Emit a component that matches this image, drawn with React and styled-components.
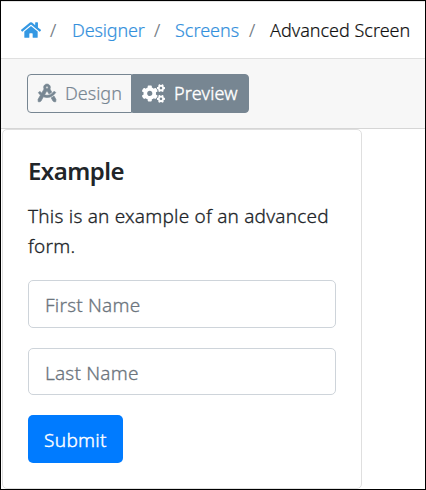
import React from "react";
import styled, { createGlobalStyle } from "styled-components";
import { FaHome, FaDraftingCompass, FaCogs } from "react-icons/fa";

const GlobalStyle = createGlobalStyle`
  * { box-sizing: border-box; }
  body { margin: 0; background: #fff; }
`;

const Frame = styled.div`
  width: 426px;
  height: 490px;
  border: 1px solid #000;
  background: #fff;
  overflow: hidden;
  font-family: "Noto Sans", sans-serif;
  font-weight: 300;
  -webkit-text-stroke: 0.2px currentColor;
`;

const Breadcrumb = styled.nav`
  display: flex;
  align-items: center;
  height: 58px;
  padding: 0 0 0 20px;
  border-top: 1px solid #e4e4e4;
  border-bottom: 1px solid #e0e0e0;
  font-size: 18px;
  line-height: 28px;
  white-space: nowrap;
`;

const HomeLink = styled.a`
  display: flex;
  width: 20px;
  color: #3498e3;
`;

const Crumb = styled.a`
  width: ${(p) => p.$width}px;
  color: ${(p) => (p.$current ? "#111" : "#3490dc")};
  letter-spacing: ${(p) => p.$spacing}px;
`;

const Separator = styled.span`
  width: ${(p) => p.$width}px;
  padding-left: ${(p) => p.$inset}px;
  color: #6c757d;
`;

const Toolbar = styled.div`
  height: 70px;
  padding: 15px 0 0 26px;
  background: #f7f7f7;
  border-bottom: 1px solid #d6d6d6;
`;

const ButtonGroup = styled.div`
  display: flex;
  width: 222px;
  height: 39px;
`;

const ModeButton = styled.button`
  display: flex;
  align-items: center;
  width: ${(p) => p.$width}px;
  padding: 0 0 1px ${(p) => p.$inset}px;
  gap: ${(p) => p.$gap}px;
  border: 1px solid #778692;
  border-radius: ${(p) => (p.$active ? "0 4px 4px 0" : "4px 0 0 4px")};
  background: ${(p) => (p.$active ? "#778692" : "transparent")};
  color: ${(p) => (p.$active ? "#fff" : "#778692")};
  font: 300 18px/28px "Noto Sans", sans-serif;
  -webkit-text-stroke: ${(p) => (p.$active ? 0.4 : 0.2)}px currentColor;
  letter-spacing: ${(p) => p.$spacing}px;
  white-space: nowrap;
`;

const CompassIcon = styled(FaDraftingCompass)`
  stroke: currentColor;
  stroke-width: 18px;
  overflow: visible;
`;

const Card = styled.form`
  width: 360px;
  height: 360px;
  margin-left: 1px;
  padding: 25px 25px;
  border: 1px solid #dfdfdf;
  border-radius: 5px;
  color: #212529;
`;

const Title = styled.h1`
  margin: 0 0 14px;
  font-size: 24px;
  font-weight: 600;
  line-height: 32px;
  letter-spacing: -0.55px;
  -webkit-text-stroke: 0;
`;

const Description = styled.p`
  margin: 0 0 19px;
  font-size: 19px;
  line-height: 30px;
  letter-spacing: 0.21px;
  -webkit-text-stroke: 0.3px currentColor;
`;

const Field = styled.input`
  display: block;
  width: 308px;
  height: ${(p) => p.$height}px;
  margin: 0 0 20px;
  padding: 2px 15px 0 16px;
  border: 1px solid #ced4da;
  border-radius: 5px;
  background: #fff;
  font: 300 19px "Noto Sans", sans-serif;
  -webkit-text-stroke: 0.3px currentColor;
  letter-spacing: 0.2px;
  &::placeholder { color: #6c757d; opacity: 1; }
`;

const SubmitButton = styled.button`
  display: block;
  width: 95px;
  height: 48px;
  padding: 2px 0 0;
  border: 0;
  border-radius: 5px;
  background: #007bff;
  color: #fff;
  font: 300 19px "Noto Sans", sans-serif;
  -webkit-text-stroke: 0.4px currentColor;
  letter-spacing: 0.3px;
`;

export default function App() {
  return (
    <>
      <GlobalStyle />
      <Frame>
        <Breadcrumb>
          <HomeLink><FaHome size={20} /></HomeLink>
          <Separator $width={31} $inset={9}>/</Separator>
          <Crumb $width={73} $spacing={-0.15}>Designer</Crumb>
          <Separator $width={30} $inset={9}>/</Separator>
          <Crumb $width={65} $spacing={0}>Screens</Crumb>
          <Separator $width={30} $inset={9}>/</Separator>
          <Crumb $current $width={142} $spacing={0}>Advanced Screen</Crumb>
        </Breadcrumb>
        <Toolbar>
          <ButtonGroup>
            <ModeButton $width={105} $inset={10} $gap={9} $spacing={0}>
              <CompassIcon size={18} />Design
            </ModeButton>
            <ModeButton $active $width={117} $inset={9} $gap={9} $spacing={0.2}>
              <FaCogs size={23} />Preview
            </ModeButton>
          </ButtonGroup>
        </Toolbar>
        <Card onSubmit={(e) => e.preventDefault()}>
          <Title>Example</Title>
          <Description>This is an example of an advanced form.</Description>
          <Field $height={48} placeholder="First Name" />
          <Field $height={47} placeholder="Last Name" />
          <SubmitButton>Submit</SubmitButton>
        </Card>
      </Frame>
    </>
  );
}
